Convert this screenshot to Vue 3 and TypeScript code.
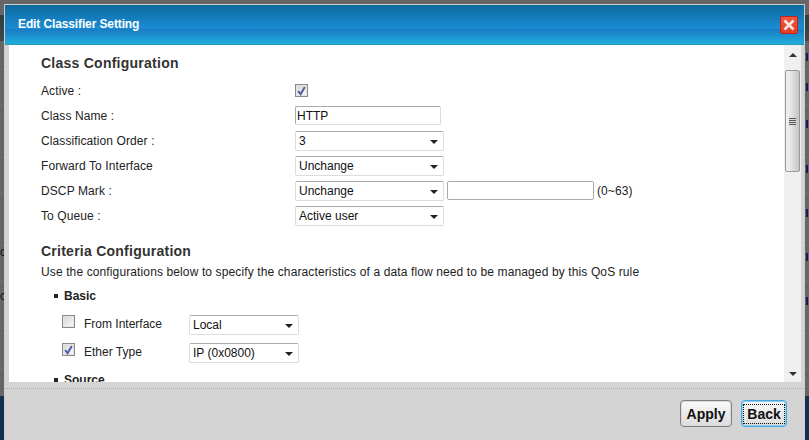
<script setup lang="ts">
interface Row { label: string; kind: 'check' | 'text' | 'select'; value?: string; extra?: boolean }
const classRows: Row[] = [
  { label: 'Active :', kind: 'check' },
  { label: 'Class Name :', kind: 'text', value: 'HTTP' },
  { label: 'Classification Order :', kind: 'select', value: '3' },
  { label: 'Forward To Interface', kind: 'select', value: 'Unchange' },
  { label: 'DSCP Mark :', kind: 'select', value: 'Unchange', extra: true },
  { label: 'To Queue :', kind: 'select', value: 'Active user' },
]
const basicRows = [
  { label: 'From Interface', value: 'Local', checked: false },
  { label: 'Ether Type', value: 'IP (0x0800)', checked: true },
]
const marks = [53, 83, 120, 165, 209, 253, 297]
</script>

<template>
  <div class="page">
    <div class="backdrop">
      <div class="bd-top"></div>
      <div class="bd-bottom"></div>
      <span class="bd-c c1">c</span>
      <span class="bd-c c2">c</span>
      <i v-for="m in marks" :key="m" class="mark" :style="{ top: m + 'px' }"></i>
    </div>
    <div class="dialog">
      <header class="title">
        <span class="title-text">Edit Classifier Setting</span>
        <button class="close" aria-label="Close">
          <svg width="12" height="12" viewBox="0 0 12 12"><path d="M1.5 1.5 10.5 10.5M10.5 1.5 1.5 10.5" stroke="#fde8e4" stroke-width="2.6" fill="none"/></svg>
        </button>
      </header>
      <div class="body">
        <div class="content">
          <h2 class="h first">Class Configuration</h2>
          <div v-for="r in classRows" :key="r.label" class="row">
            <span class="label">{{ r.label }}</span>
            <span v-if="r.kind === 'check'" class="check on">
              <svg width="9" height="10" viewBox="0 0 9 10"><path d="M1.2 5 3.6 8.2 7.8 1" stroke="#4a5f9f" stroke-width="2" fill="none"/></svg>
            </span>
            <span v-else-if="r.kind === 'text'" class="input name">{{ r.value }}</span>
            <span v-else class="select wide">{{ r.value }}<i class="caret"></i></span>
            <template v-if="r.extra">
              <span class="input dscp"></span>
              <span class="hint">(0~63)</span>
            </template>
          </div>
          <h2 class="h second">Criteria Configuration</h2>
          <p class="desc">Use the configurations below to specify the characteristics of a data flow need to be managed by this QoS rule</p>
          <div class="bullet basic">Basic</div>
          <div v-for="b in basicRows" :key="b.label" class="crow">
            <span class="check" :class="{ on: b.checked }">
              <svg v-if="b.checked" width="9" height="10" viewBox="0 0 9 10"><path d="M1.2 5 3.6 8.2 7.8 1" stroke="#4a5f9f" stroke-width="2" fill="none"/></svg>
            </span>
            <span class="clabel">{{ b.label }}</span>
            <span class="select small">{{ b.value }}<i class="caret"></i></span>
          </div>
          <div class="bullet source">Source</div>
        </div>
        <div class="scrollbar">
          <i class="arrow up"></i>
          <div class="thumb"><span class="grip"></span></div>
          <i class="arrow down"></i>
        </div>
      </div>
      <footer class="footer">
        <button class="btn apply">Apply</button>
        <button class="btn back"><span>Back</span></button>
      </footer>
    </div>
  </div>
</template>

<style>
html, body { margin: 0; padding: 0; overflow: hidden; }
</style>

<style scoped>
.page { position: relative; width: 809px; height: 440px; overflow: hidden; background: #666; font-family: "Liberation Sans", Arial, sans-serif; color: #222; font-size: 12px; }
.backdrop { position: absolute; inset: 0; background: repeating-linear-gradient(to bottom, #666 0, #666 43px, #5a5a5a 43px, #5a5a5a 44px); background-position: 0 23px; }
.bd-top { position: absolute; left: 0; right: 0; top: 15px; height: 26px; background: linear-gradient(#2d3e3e, #3c4a4a); }
.bd-bottom { position: absolute; left: 0; right: 0; top: 396px; bottom: 0; background: #12304f; }
.bd-c { position: absolute; left: 0; font-size: 12px; color: #111; }
.c1 { top: 245px; }
.c2 { top: 289px; }
.mark { position: absolute; left: 806px; width: 2px; height: 8px; background: #1a1a55; }
.dialog { position: absolute; left: 4px; top: 4px; width: 801px; height: 460px; box-sizing: border-box; background: #d4d4d4; border: 1px dotted #c8c8c8; display: flex; flex-direction: column; }
.title { height: 40px; flex: none; box-sizing: border-box; border-bottom: 1px solid #2a9ab0; background: linear-gradient(#0f6a9e 0, #1a8dd6 62%, #1a7cc4 62%, #20addb 100%); display: flex; align-items: center; justify-content: space-between; padding: 0 6px 0 13px; }
.title-text { color: #fff; font-weight: bold; font-size: 12px; margin-top: -2px; letter-spacing: -.12px; }
.close { width: 18px; height: 18px; padding: 0; box-sizing: border-box; border: 1px solid #c8201c; border-radius: 2px; background: linear-gradient(#ee5a44, #e23d1e); display: flex; align-items: center; justify-content: center; }
.body { height: 337px; flex: none; margin: 0 3px 0 4px; display: flex; background: #fff; }
.content { flex: 1; overflow: hidden; padding: 0 0 0 32px; color: #222; }
.h { margin: 0; font-size: 14px; font-weight: bold; letter-spacing: .25px; line-height: 16px; color: #333; }
.first { margin-top: 10px; margin-bottom: 7px; }
.row { display: flex; align-items: center; height: 25px; }
.label { width: 254px; flex: none; letter-spacing: .1px; }
.check { width: 13px; height: 13px; box-sizing: border-box; border: 1px solid #8a8a8a; box-shadow: inset 0 0 0 1px #e4e4e4; background: linear-gradient(135deg, #d4d4d4, #fbfbfb); display: inline-flex; align-items: center; justify-content: center; flex: none; }
.input, .select { box-sizing: border-box; display: flex; align-items: center; height: 19px; border: 1px solid #aaa; border-bottom-color: #ddd; border-right-color: #ddd; border-radius: 2px; background: #fff; padding-left: 1px; position: relative; font-size: 12px; color: #111; }
.select { border: 1px solid #ddd; border-top-color: #aaa; height: 20px; padding-left: 3px; }
.name { width: 146px; }
.wide { width: 149px; }
.dscp { width: 147px; margin-left: 3px; border-color: #aaa; }
.hint { margin-left: 3px; letter-spacing: .1px; }
.caret { position: absolute; right: 5px; top: 8px; width: 0; height: 0; border: 4px solid transparent; border-top: 4px solid #222; border-bottom: 0; }
.second { margin-top: 15px; }
.desc { margin: 6px 0 0; line-height: 15px; letter-spacing: .12px; }
.bullet { font-weight: bold; position: relative; padding-left: 23px; line-height: 15px; }
.bullet::before { content: ""; position: absolute; left: 13px; top: 5px; width: 4px; height: 4px; background: #222; }
.basic { margin-top: 9px; margin-bottom: 11px; }
.crow { display: flex; align-items: flex-start; margin-left: 21px; height: 20px; margin-top: 8px; line-height: 19px; }
.crow .check { margin-right: 9px; }
.clabel { width: 105px; }
.small { width: 110px; }
.source { margin-top: 10px; }
.scrollbar { width: 17px; flex: none; background: #f0f0f0; position: relative; display: flex; flex-direction: column; align-items: center; }
.arrow { width: 0; height: 0; border: 4px solid transparent; flex: none; }
.up { border-bottom: 4px solid #333; border-top: 0; margin-top: 8px; }
.down { border-top: 4px solid #333; border-bottom: 0; margin-top: auto; margin-bottom: 6px; }
.thumb { width: 15px; height: 102px; box-sizing: border-box; margin-top: 13px; border: 1px solid #999; border-radius: 2px; background: linear-gradient(to right, #f2f2f2, #e4e4e4 40%, #c4c4c4); display: flex; align-items: center; justify-content: center; }
.grip { width: 7px; height: 7px; background: repeating-linear-gradient(#555 0, #555 1px, #ddd 1px, #ddd 2px); }
.footer { flex: 1; background: #d4d4d4; margin-top: 6px; border-top: 1px dotted #aaa; display: flex; align-items: flex-start; justify-content: flex-end; padding: 11px 17px 0 0; gap: 9px; }
.btn { box-sizing: border-box; height: 27px; border: 1px solid #808080; box-shadow: inset 0 0 0 1px #d8d8d8; border-radius: 4px; background: linear-gradient(#fafafa, #dcdcdc); font: bold 14px "Liberation Sans", Arial, sans-serif; color: #111; padding: 0; }
.apply { width: 52px; }
.back { width: 46px; border-color: #3fa7dc; box-shadow: inset 0 0 0 1px #8fd0f0; display: flex; align-items: center; justify-content: center; }
.back span { border: 1px dotted #111; padding: 1px 3px; }
</style>
